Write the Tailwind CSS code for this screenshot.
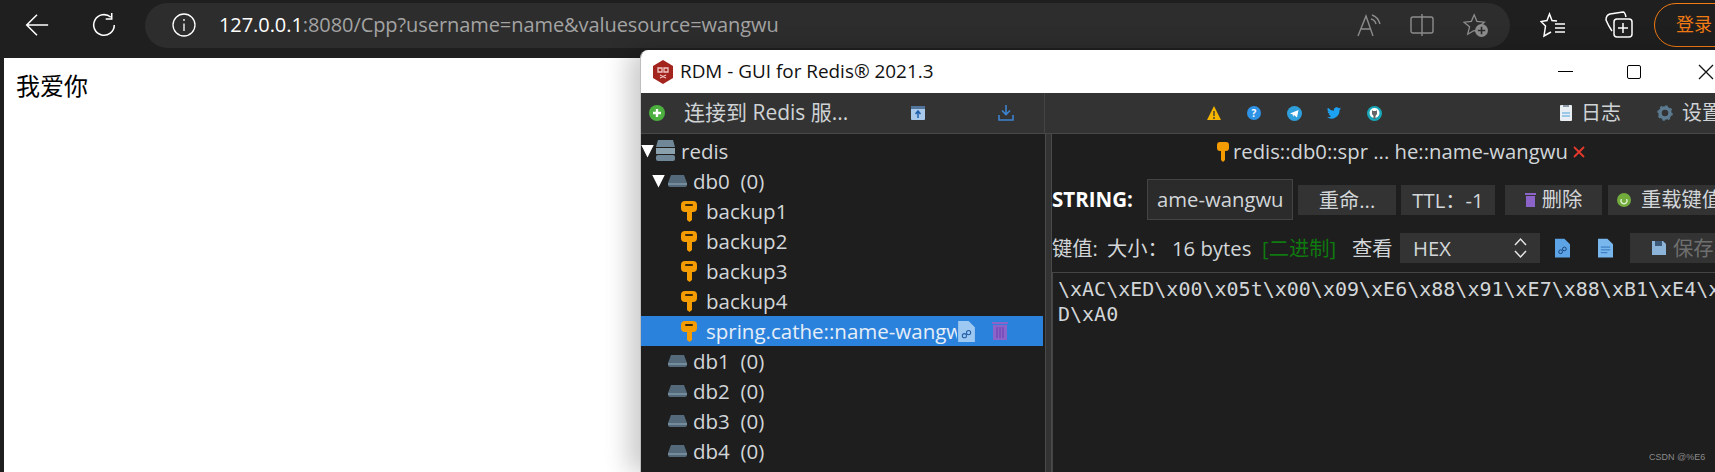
<!DOCTYPE html>
<html lang="en">
<head>
  <meta charset="UTF-8" />
  <title>RDM over browser</title>
  <script src="https://cdn.jsdelivr.net/npm/@tailwindcss/browser@4"></script>
</head>
<body class="relative w-[1715px] h-[472px] overflow-hidden bg-[#1f1f1f] font-['Open_Sans','Noto_Sans_CJK_SC',sans-serif]">
  <!-- Browser toolbar -->
  <header class="h-[50px] flex items-center">
    <svg class="ml-[25px] w-[24px] h-[24px] shrink-0" viewBox="0 0 28 28" fill="none" stroke="#fff" stroke-width="1.8"><path d="M2 14H27M14 2L2 14L14 26"/></svg>
    <svg class="ml-[43px] w-[24px] h-[24px] shrink-0" viewBox="0 0 28 28" fill="none" stroke="#fff" stroke-width="1.8"><path d="M22 5A12 12 0 1 0 26 14M23 0V7H16"/></svg>
    <div class="ml-[29px] w-[1365px] h-[45px] shrink-0 rounded-full bg-[#2d2d2d] flex items-center">
      <svg class="ml-[27px] w-[24px] h-[24px] shrink-0" viewBox="0 0 24 24" fill="none" stroke="#fff" stroke-width="1.3"><circle cx="12" cy="12" r="11"/><path d="M12 10.500V18M12 6V8"/></svg>
      <div class="ml-[23px] w-[561px] shrink-0 text-[20px] tracking-[-0.07px] text-[#a3a3a3] whitespace-nowrap"><span class="text-white">127.0.0.1</span>:8080/Cpp?username=name&amp;valuesource=wangwu</div>
      <svg class="ml-[577px] w-[24px] h-[24px] shrink-0" viewBox="0 0 24 24" fill="none" stroke="#8d8d8d" stroke-width="1.4"><path d="M1 23L9 3L16 23M4 16H14M15 2Q21 4 23 11M14 6Q18 7 19 11"/></svg>
      <svg class="ml-[29px] w-[24px] h-[24px] shrink-0" viewBox="0 0 24 24" fill="none" stroke="#8d8d8d" stroke-width="1.4"><rect x="1" y="4" width="22" height="16" rx="2"/><path d="M12 1V23"/></svg>
      <svg class="ml-[29px] w-[26px] h-[24px] shrink-0" viewBox="0 0 28 26" fill="none" stroke="#8d8d8d" stroke-width="1.4"><path d="M12 2L15 9L23 10L17 15L19 23L12 19L5 23L7 15L1 10L9 9Z"/><circle cx="20" cy="19" r="7" fill="#8d8d8d" stroke="none"/><path d="M16 19H24M20 15V23" stroke="#2d2d2d" stroke-width="1.8"/></svg>
    </div>
    <svg class="ml-[30px] w-[26px] h-[26px] shrink-0" viewBox="0 0 26 26" fill="none" stroke="#fff" stroke-width="1.5"><path d="M17 9L12 8.500L9.500 2L7 8.500L1 9.500L5.500 14L4 24L11 20"/><path d="M15 12H25M15 16H25M15 20H25"/></svg>
    <svg class="ml-[39px] w-[28px] h-[28px] shrink-0" viewBox="0 0 28 28" fill="none" stroke="#fff" stroke-width="1.5"><path d="M7 20Q3 14 1 9Q1 4 5 3L18 1Q20 1 21 6"/><rect x="9" y="8" width="18" height="18" rx="3"/><path d="M18 12V22M13 17H23"/></svg>
    <div class="ml-[21px] w-[90px] h-[44px] shrink-0 rounded-full border-[1.5px] border-[#f07a13] text-[#f07a13] text-[18px] leading-[40px] pl-[21px] whitespace-nowrap">登录</div>
  </header>

  <!-- Page under the toolbar -->
  <main class="mt-[8px] ml-[4px] h-[414px] bg-white pl-[12px] pt-[12px] text-[24px] leading-[32px] text-black">我爱你</main>

  <!-- RDM window -->
  <section class="absolute left-[640px] top-[50px] w-[1090px] h-[422px] flex flex-col rounded-tl-[8px] bg-[#1e1e1e] border-l border-[#bdbdbd] overflow-hidden shadow-[-12px_0_24px_rgba(0,0,0,0.2)]">
    <div class="h-[43px] shrink-0 bg-white flex items-center">
      <svg class="ml-[11px] w-[22px] h-[24px] shrink-0" viewBox="0 0 22 24"><path d="M11 0L21 6V18L11 24L1 18V6Z" fill="#a3231d"/><path d="M6 8H10V12H6ZM12 8H16V12H12ZM8 15L14 18M14 15L8 18" fill="none" stroke="#f1c9c4" stroke-width="1.300"/></svg>
      <div class="ml-[6px] w-[879px] shrink-0 text-[18.900px] text-[#111] whitespace-nowrap">RDM - GUI for Redis® 2021.3</div>
      <div class="w-[15px] h-[1.5px] bg-black ml-[-1px] shrink-0"></div>
      <div class="ml-[54px] w-[14px] h-[14px] shrink-0 rounded-[2px] border-[1.5px] border-black"></div>
      <svg class="ml-[57px] w-[16px] h-[16px] shrink-0" viewBox="0 0 16 16" stroke="#111" stroke-width="1.3"><path d="M1 1L15 15M15 1L1 15"/></svg>
    </div>
    <div class="h-[41px] shrink-0 bg-[#333] border-b border-[#484848] flex items-center text-[20px] text-[#cfd3d6] whitespace-nowrap">
      <div class="w-[404px] h-full shrink-0 flex items-center border-r border-[#444]">
        <svg class="ml-[8px] w-[16px] h-[16px] shrink-0" viewBox="0 0 16 16"><circle cx="8" cy="8" r="8" fill="#4caf3f"/><path d="M4 8H12M8 4V12" stroke="#fff" stroke-width="2.4"/></svg>
        <span class="ml-[19px] w-[227px] shrink-0 text-[21px]">连接到 Redis 服...</span>
        <svg class="w-[14px] h-[14px] shrink-0" viewBox="0 0 14 14"><rect width="14" height="14" rx="1" fill="#a9c9ea"/><rect width="14" height="3" fill="#53759b"/><path d="M7 12V6M4.500 8L7 5L9.500 8" stroke="#1f5fae" stroke-width="1.500" fill="none"/></svg>
        <svg class="ml-[73px] w-[16px] h-[16px] shrink-0" viewBox="0 0 16 16" fill="none" stroke="#3d83d0" stroke-width="1.600"><path d="M8 0V9M4 5.500L8 9.500L12 5.500M1 10V15H15V10"/></svg>
      </div>
      <svg class="ml-[162px] w-[14px] h-[14px] shrink-0" viewBox="0 0 14 14"><path d="M7 0L14 14H0Z" fill="#f4b400"/><path d="M7 5V10M7 11V13" stroke="#333" stroke-width="1.300"/></svg>
      <div class="ml-[26px] w-[14px] h-[14px] shrink-0 rounded-full bg-[#2e92e6] text-white text-[10px] leading-[14px] text-center font-bold">?</div>
      <svg class="ml-[26px] w-[15px] h-[15px] shrink-0" viewBox="0 0 15 15"><circle cx="7.500" cy="7.500" r="7.500" fill="#2f9fdc"/><path d="M3 7.500L11.500 4L10 11.500L7 9L6 11L5.800 8.500Z" fill="#fff"/></svg>
      <svg class="ml-[25px] w-[14px] h-[12px] shrink-0" viewBox="0 0 24 20"><path d="M24 2.400a10 10 0 0 1-2.800.800 5 5 0 0 0 2.200-2.700 10 10 0 0 1-3.100 1.200 4.900 4.900 0 0 0-8.400 4.500A14 14 0 0 1 1.700 1 4.900 4.900 0 0 0 3.200 7.600 4.900 4.900 0 0 1 1 7a4.900 4.900 0 0 0 3.900 4.800 5 5 0 0 1-2.200.100 4.900 4.900 0 0 0 4.600 3.400A9.900 9.900 0 0 1 0 17.400 14 14 0 0 0 21.500 5a10 10 0 0 0 2.500-2.600Z" fill="#1da1f2"/></svg>
      <svg class="ml-[26px] w-[15px] h-[15px] shrink-0" viewBox="0 0 15 15"><circle cx="7.500" cy="7.500" r="7.500" fill="#17a7b8"/><circle cx="7.500" cy="7" r="5" fill="#fff"/><path d="M5 4L6 5H9L10 4V8L8.500 10V13H6.500V10L5 8Z" fill="#666"/></svg>
      <svg class="ml-[178px] w-[12px] h-[16px] shrink-0" viewBox="0 0 12 16"><rect width="12" height="16" rx="1" fill="#e9eef2"/><rect x="3" width="6" height="2" fill="#8a9aa8"/><path d="M2 8H10M2 11H10" stroke="#4da3e0"/></svg>
      <span class="ml-[9px]">日志</span>
      <svg class="ml-[36px] w-[16px] h-[16px] shrink-0" viewBox="0 0 16 16"><circle cx="8" cy="8" r="5" fill="none" stroke="#5c7b90" stroke-width="3.500"/><circle cx="8" cy="8" r="7" fill="none" stroke="#5c7b90" stroke-width="1.500" stroke-dasharray="2.500 3"/></svg>
      <span class="ml-[9px]">设置</span>
    </div>
    <div class="flex grow min-h-0 text-[#d2d6d9]">
      <!-- Connection tree -->
      <div class="w-[404px] shrink-0 pt-[2px] text-[20.500px] leading-[30px] whitespace-nowrap">
        <div class="h-[30px] flex items-center">
          <span class="w-[13px] h-[13px] bg-white [clip-path:polygon(0_0,100%_0,50%_100%)]"></span>
          <svg class="ml-[2px] w-[19px] h-[22px]" viewBox="0 0 19 22"><path d="M2 0H17L19 7H0Z" fill="#6f8796"/><rect y="8" width="19" height="6" fill="#8aa0ad"/><rect y="15" width="19" height="6" rx="2" fill="#6f8796"/></svg>
          <span class="ml-[6px]">redis</span>
        </div>
        <div class="h-[30px] flex items-center pl-[11px]">
          <span class="w-[13px] h-[13px] bg-white [clip-path:polygon(0_0,100%_0,50%_100%)]"></span>
          <svg class="ml-[3px] w-[19px] h-[12px]" viewBox="0 0 19 12"><path d="M3 0H16L19 8V10Q19 12 17 12H2Q0 12 0 10V8Z" fill="#54697a"/><path d="M0 9H19" stroke="#7e97a6" stroke-width="1.500"/></svg>
          <span class="ml-[6px]">db0&nbsp; (0)</span>
        </div>
        <div class="h-[30px] flex items-center pl-[40px]">
          <svg class="w-[16px] h-[21px]" viewBox="0 0 16 21"><path d="M4 0H12Q16 0 16 4V7Q16 11 12 11H11V19L8.500 21L6 19V11H4Q0 11 0 7V4Q0 0 4 0Z" fill="#f59c00"/><rect x="4" y="3" width="8" height="2" rx="1" fill="#3a2a08"/></svg>
          <span class="ml-[9px]">backup1</span>
        </div>
        <div class="h-[30px] flex items-center pl-[40px]">
          <svg class="w-[16px] h-[21px]" viewBox="0 0 16 21"><path d="M4 0H12Q16 0 16 4V7Q16 11 12 11H11V19L8.500 21L6 19V11H4Q0 11 0 7V4Q0 0 4 0Z" fill="#f59c00"/><rect x="4" y="3" width="8" height="2" rx="1" fill="#3a2a08"/></svg>
          <span class="ml-[9px]">backup2</span>
        </div>
        <div class="h-[30px] flex items-center pl-[40px]">
          <svg class="w-[16px] h-[21px]" viewBox="0 0 16 21"><path d="M4 0H12Q16 0 16 4V7Q16 11 12 11H11V19L8.500 21L6 19V11H4Q0 11 0 7V4Q0 0 4 0Z" fill="#f59c00"/><rect x="4" y="3" width="8" height="2" rx="1" fill="#3a2a08"/></svg>
          <span class="ml-[9px]">backup3</span>
        </div>
        <div class="h-[30px] flex items-center pl-[40px]">
          <svg class="w-[16px] h-[21px]" viewBox="0 0 16 21"><path d="M4 0H12Q16 0 16 4V7Q16 11 12 11H11V19L8.500 21L6 19V11H4Q0 11 0 7V4Q0 0 4 0Z" fill="#f59c00"/><rect x="4" y="3" width="8" height="2" rx="1" fill="#3a2a08"/></svg>
          <span class="ml-[9px]">backup4</span>
        </div>
        <div class="h-[30px] w-[402px] flex items-center pl-[40px] bg-[#2b82dd] text-[#e6eef7]">
          <svg class="w-[16px] h-[21px] shrink-0" viewBox="0 0 16 21"><path d="M4 0H12Q16 0 16 4V7Q16 11 12 11H11V19L8.500 21L6 19V11H4Q0 11 0 7V4Q0 0 4 0Z" fill="#f59c00"/><rect x="4" y="3" width="8" height="2" rx="1" fill="#3a2a08"/></svg>
          <span class="ml-[9px] w-[251px] overflow-hidden shrink-0">spring.cathe::name-wangwu</span>
          <svg class="w-[19px] h-[21px] shrink-0" viewBox="0 0 16 20"><path d="M0 0H10L16 6V20H0Z" fill="#9cc8f2"/><circle cx="6" cy="14" r="2" fill="none" stroke="#2460a8"/><circle cx="10" cy="11" r="2" fill="none" stroke="#2460a8"/></svg>
          <svg class="ml-[16px] w-[16px] h-[18px] shrink-0" viewBox="0 0 16 18"><rect width="16" height="2" fill="#8c63c8"/><path d="M1 3H15V18H1Z" fill="#8c63c8"/><path d="M5 5V16M8 5V16M11 5V16" stroke="#6c3fb0"/></svg>
        </div>
        <div class="h-[30px] flex items-center pl-[27px]">
          <svg class="w-[19px] h-[12px]" viewBox="0 0 19 12"><path d="M3 0H16L19 8V10Q19 12 17 12H2Q0 12 0 10V8Z" fill="#54697a"/><path d="M0 9H19" stroke="#7e97a6" stroke-width="1.500"/></svg>
          <span class="ml-[6px]">db1&nbsp; (0)</span>
        </div>
        <div class="h-[30px] flex items-center pl-[27px]">
          <svg class="w-[19px] h-[12px]" viewBox="0 0 19 12"><path d="M3 0H16L19 8V10Q19 12 17 12H2Q0 12 0 10V8Z" fill="#54697a"/><path d="M0 9H19" stroke="#7e97a6" stroke-width="1.500"/></svg>
          <span class="ml-[6px]">db2&nbsp; (0)</span>
        </div>
        <div class="h-[30px] flex items-center pl-[27px]">
          <svg class="w-[19px] h-[12px]" viewBox="0 0 19 12"><path d="M3 0H16L19 8V10Q19 12 17 12H2Q0 12 0 10V8Z" fill="#54697a"/><path d="M0 9H19" stroke="#7e97a6" stroke-width="1.500"/></svg>
          <span class="ml-[6px]">db3&nbsp; (0)</span>
        </div>
        <div class="h-[30px] flex items-center pl-[27px]">
          <svg class="w-[19px] h-[12px]" viewBox="0 0 19 12"><path d="M3 0H16L19 8V10Q19 12 17 12H2Q0 12 0 10V8Z" fill="#54697a"/><path d="M0 9H19" stroke="#7e97a6" stroke-width="1.500"/></svg>
          <span class="ml-[6px]">db4&nbsp; (0)</span>
        </div>
      </div>
      <!-- Splitter -->
      <div class="w-[7px] shrink-0 bg-[#333] border-x border-[#4a4a4a]"></div>
      <!-- Key view -->
      <div class="grow min-w-0 whitespace-nowrap text-[20.300px]">
        <div class="h-[35px] flex items-center pl-[165px]">
          <svg class="w-[12px] h-[20px] shrink-0" viewBox="0 0 12 20"><path d="M3 0H9Q12 0 12 3V6Q12 9 9 9H8V18L6 20L4 18V9H3Q0 9 0 6V3Q0 0 3 0Z" fill="#f59c00"/></svg>
          <span class="ml-[4px]">redis::db0::spr ... he::name-wangwu</span>
          <svg class="ml-[5px] w-[12px] h-[12px] shrink-0" viewBox="0 0 12 12" stroke="#e5392d" stroke-width="1.800"><path d="M1 1L11 11M11 1L1 11"/></svg>
        </div>
        <div class="h-[41px] mt-[10px] flex items-center">
          <span class="w-[95px] shrink-0 font-bold text-white text-[20.500px]">STRING:</span>
          <div class="w-[146px] h-[41px] shrink-0 bg-[#2b2b2b] border border-[#444] pl-[9px] leading-[39px] overflow-hidden">ame-wangwu</div>
          <div class="ml-[5px] w-[98px] h-[30px] shrink-0 bg-[#333] text-center leading-[30px]">重命...</div>
          <div class="ml-[5px] w-[94px] h-[30px] shrink-0 bg-[#333] text-center leading-[30px]">TTL：-1</div>
          <div class="ml-[10px] w-[97px] h-[30px] shrink-0 bg-[#333] flex items-center justify-center">
            <svg class="w-[11px] h-[14px] shrink-0" viewBox="0 0 11 14"><path d="M0 0H11V2H0ZM1 3H10V14H1Z" fill="#8c63c8"/></svg>
            <span class="ml-[6px]">删除</span>
          </div>
          <div class="ml-[6px] w-[120px] h-[30px] shrink-0 bg-[#333] flex items-center overflow-hidden">
            <svg class="ml-[9px] w-[14px] h-[14px] shrink-0" viewBox="0 0 14 14"><circle cx="7" cy="7" r="7" fill="#72ac3c"/><path d="M4.500 6A3 3 0 1 0 9.500 6" fill="none" stroke="#dff0cc" stroke-width="1.300"/></svg>
            <span class="ml-[10px]">重载键值</span>
          </div>
        </div>
        <div class="h-[30px] mt-[13px] flex items-center">
          <span class="w-[55px] shrink-0">键值:</span>
          <span class="w-[65px] shrink-0">大小：</span>
          <span class="w-[90px] shrink-0">16 bytes</span>
          <span class="w-[90px] shrink-0 text-[#0f7a0f]">[二进制]</span>
          <span class="w-[48px] shrink-0">查看</span>
          <div class="w-[140px] h-[30px] shrink-0 bg-[#333] flex items-center pl-[13px]">
            <span class="w-[101px] shrink-0">HEX</span>
            <svg class="w-[13px] h-[22px] shrink-0" viewBox="0 0 13 22" fill="none" stroke="#e4e4e4" stroke-width="1.500"><path d="M1 8L6.500 2L12 8M1 14L6.500 20L12 14"/></svg>
          </div>
          <svg class="ml-[15px] w-[15px] h-[20px] shrink-0" viewBox="0 0 16 20"><path d="M0 0H10L16 6V20H0Z" fill="#5ca4e6"/><circle cx="6" cy="14" r="2" fill="none" stroke="#173e73"/><circle cx="10" cy="11" r="2" fill="none" stroke="#173e73"/></svg>
          <svg class="ml-[28px] w-[15px] h-[20px] shrink-0" viewBox="0 0 16 20"><path d="M0 0H10L16 6V20H0Z" fill="#78b6ee"/><path d="M3 9H13M3 12H13M3 15H10" stroke="#2e6fb5"/></svg>
          <div class="ml-[17px] w-[120px] h-[30px] shrink-0 bg-[#333] flex items-center text-[#6f6f6f]">
            <svg class="ml-[22px] w-[14px] h-[14px] shrink-0" viewBox="0 0 14 14"><path d="M0 0H11L14 3V14H0Z" fill="#8cb4d8"/><rect x="3" width="7" height="5" fill="#3d5a78"/></svg>
            <span class="ml-[7px]">保存</span>
          </div>
        </div>
        <div class="mt-[9px] h-[300px] border border-[#444] pl-[5px] pt-[4px] font-['DejaVu_Sans_Mono',monospace] text-[20px] leading-[25px] overflow-hidden">
          <div>\xAC\xED\x00\x05t\x00\x09\xE6\x88\x91\xE7\x88\xB1\xE4\xB</div>
          <div>D\xA0</div>
        </div>
      </div>
    </div>
  </section>

  <!-- Blog watermark -->
  <div class="absolute left-[1649px] top-[451px] text-[9px] leading-[12px] text-[#8a8a8a] font-['Liberation_Sans',sans-serif]">CSDN @%E6</div>
</body>
</html>
